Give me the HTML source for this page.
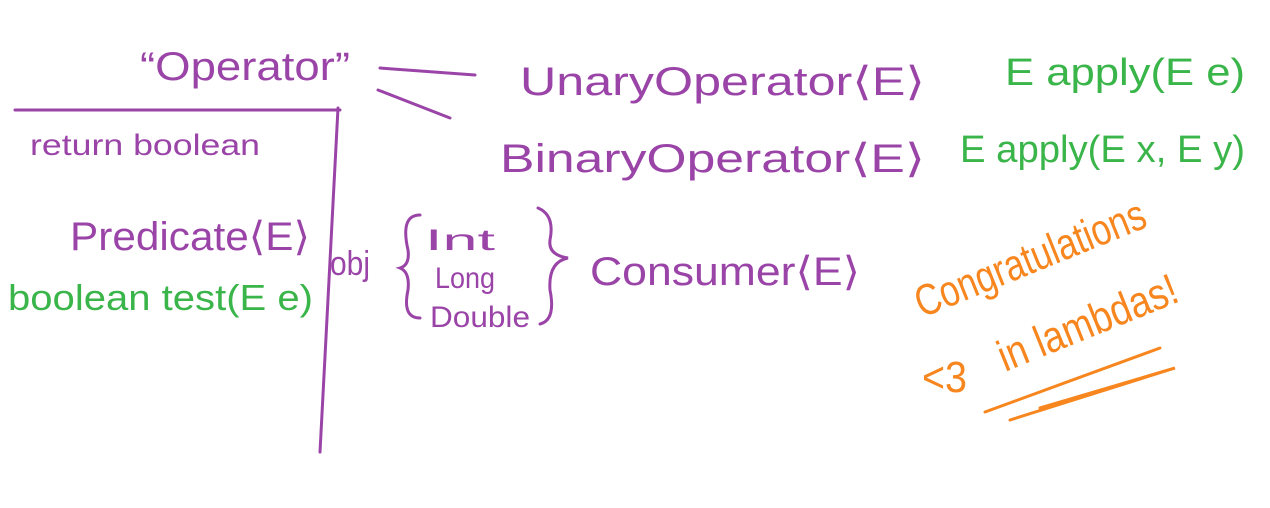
<!DOCTYPE html>
<html><head><meta charset="utf-8"><style>
html,body{margin:0;padding:0;background:#fff;width:1270px;height:508px;overflow:hidden}
text{font-family:"Liberation Sans",sans-serif}
</style></head><body>
<svg width="1270" height="508" viewBox="0 0 1270 508" xmlns="http://www.w3.org/2000/svg">
<g fill="#9a44a8" font-size="40" >
<text x="140" y="80" textLength="210" lengthAdjust="spacingAndGlyphs">“Operator”</text>
<text x="520" y="95" textLength="405" lengthAdjust="spacingAndGlyphs">UnaryOperator⟨E⟩</text>
<text x="500" y="172" textLength="425" lengthAdjust="spacingAndGlyphs">BinaryOperator⟨E⟩</text>
<text x="30" y="155" font-size="30" textLength="230" lengthAdjust="spacingAndGlyphs">return  boolean</text>
<text x="70" y="250" textLength="240" lengthAdjust="spacingAndGlyphs">Predicate⟨E⟩</text>
<text x="330" y="275" font-size="34" textLength="40" lengthAdjust="spacingAndGlyphs">obj</text>
<text x="425" y="250" font-size="30" textLength="70" lengthAdjust="spacingAndGlyphs">Int</text>
<text x="435" y="288" font-size="30" textLength="60" lengthAdjust="spacingAndGlyphs">Long</text>
<text x="430" y="327" font-size="30" textLength="100" lengthAdjust="spacingAndGlyphs">Double</text>
<text x="590" y="285" textLength="270" lengthAdjust="spacingAndGlyphs">Consumer⟨E⟩</text>
</g>
<g fill="#3ab54a" font-size="38">
<text x="1005" y="85" textLength="240" lengthAdjust="spacingAndGlyphs">E apply(E e)</text>
<text x="960" y="162" textLength="285" lengthAdjust="spacingAndGlyphs">E apply(E x, E y)</text>
<text x="8" y="310" font-size="36" textLength="305" lengthAdjust="spacingAndGlyphs">boolean test(E e)</text>
</g>
<g fill="#f7861f" font-size="44">
<text x="922" y="318" transform="rotate(-22 922 318)" textLength="245" lengthAdjust="spacingAndGlyphs">Congratulations</text>
<text x="922" y="392" textLength="45" lengthAdjust="spacingAndGlyphs">&lt;3</text>
<text x="1005" y="372" transform="rotate(-22 1005 372)" textLength="190" lengthAdjust="spacingAndGlyphs">in lambdas!</text>
</g>
<g stroke="#9a44a8" stroke-width="3" fill="none" stroke-linecap="round">
<path d="M380 68 L475 75"/>
<path d="M378 90 L450 118"/>
<path d="M15 110 L340 110"/>
<path d="M338 108 L320 452"/>
<path d="M420 215 Q400 215 408 250 Q410 265 400 268 Q410 272 408 290 Q402 318 420 318"/>
<path d="M538 208 Q555 215 550 240 Q548 255 568 258 Q548 262 550 290 Q556 320 540 324"/>
</g>
<g stroke="#f7861f" stroke-width="3" fill="none" stroke-linecap="round">
<path d="M985 412 L1160 348"/>
<path d="M1010 420 L1175 368 L1040 408"/>
</g>
</svg>
</body></html>
